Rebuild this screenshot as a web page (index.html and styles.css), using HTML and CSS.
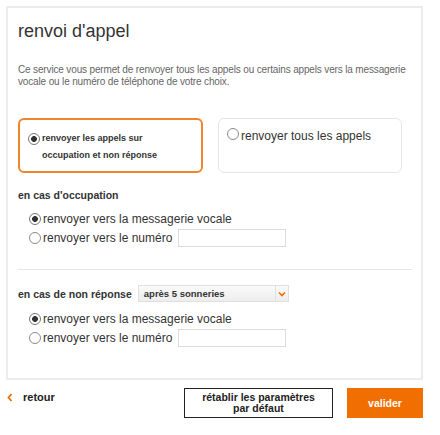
FILE: index.html
```html
<!DOCTYPE html>
<html lang="fr">
<head>
<meta charset="UTF-8">
<meta name="viewport" content="width=device-width, initial-scale=1.0">
<title>renvoi d'appel</title>
<link rel="stylesheet" href="styles.css">
</head>
<body>
  <div class="panel">
    <h1>renvoi d'appel</h1>
    <p class="intro">Ce service vous permet de renvoyer tous les appels ou certains appels vers la messagerie vocale ou le numéro de téléphone de votre choix.</p>

    <div class="choices">
      <label class="choice selected">
        <input type="radio" name="mode" checked>
        <span>renvoyer les appels sur<br>occupation et non réponse</span>
      </label>
      <label class="choice">
        <input type="radio" name="mode">
        <span>renvoyer tous les appels</span>
      </label>
    </div>

    <div class="section">
      <div class="section-title">en cas d'occupation</div>
      <label class="option"><input type="radio" name="busy" checked> renvoyer vers la messagerie vocale</label>
      <label class="option"><input type="radio" name="busy"> renvoyer vers le numéro <input type="text" class="number"></label>
    </div>

    <hr class="sep">

    <div class="section">
      <div class="section-title inline">
        en cas de non réponse
        <div class="select">
          <span>après 5 sonneries</span>
          <span class="arrow">
            <svg width="8" height="6" viewBox="0 0 8 6"><path d="M1 1.5 L4 4.5 L7 1.5" fill="none" stroke="#f16e00" stroke-width="1.6"/></svg>
          </span>
        </div>
      </div>
      <label class="option"><input type="radio" name="noanswer" checked> renvoyer vers la messagerie vocale</label>
      <label class="option"><input type="radio" name="noanswer"> renvoyer vers le numéro <input type="text" class="number"></label>
    </div>
  </div>

  <div class="footer">
    <a class="back" href="#">
      <svg width="6" height="9" viewBox="0 0 6 9"><path d="M4.5 1 L1.5 4.5 L4.5 8" fill="none" stroke="#f16e00" stroke-width="1.8"/></svg>
      retour
    </a>
    <div class="actions">
      <button class="reset">rétablir les paramètres<br>par défaut</button>
      <button class="submit">valider</button>
    </div>
  </div>
</body>
</html>
```

FILE: styles.css
```css
body {
  margin: 0;
  font-family: "Liberation Sans", Arial, Helvetica, sans-serif;
  color: #333;
  background-color: #fff;
}
.panel {
  margin: 6px 0 0 6px;
  width: 394px;
  border: 2px solid #ececec;
  padding: 11px 9px 31px 10px;
}
h1 {
  margin: 0;
  font-size: 18px;
  line-height: 24px;
  font-weight: normal;
  color: #333;
}
.intro {
  margin: 21px 0 0 0;
  font-size: 10px;
  letter-spacing: -0.15px;
  line-height: 12px;
  color: #666;
}
.choices {
  display: flex;
  gap: 15px;
  margin-top: 30px;
}
.choice {
  display: flex;
  align-items: flex-start;
  width: 184px;
  height: 55px;
  box-sizing: border-box;
  border: 1px solid #e6e6e6;
  border-radius: 6px;
  padding: 9px 8px;
  font-size: 12px;
  line-height: 16px;
  color: #333;
}
.choice input {
  margin-top: 4px;
}
.choice.selected {
  width: 185px;
  border: 2px solid #f0852d;
  padding: 10px 8px;
  font-size: 9px;
  font-weight: bold;
  line-height: 17px;
}
.choice.selected input {
  margin-top: 3px;
}
input[type="radio"] {
  appearance: none;
  -webkit-appearance: none;
  width: 12px;
  height: 12px;
  margin: 0 2px 0 0;
  flex-shrink: 0;
  border: 1px solid #8a8a8a;
  border-radius: 50%;
  background: #fff;
  box-sizing: border-box;
}
input[type="radio"]:checked {
  background: radial-gradient(circle, #333 0 2.6px, #fff 3.2px);
  border-color: #777;
}
.section {
  margin-top: 15px;
}
.section-title {
  font-size: 10.5px;
  font-weight: bold;
  line-height: 14px;
  margin-bottom: 7px;
}
.section-title.inline {
  display: flex;
  align-items: center;
  gap: 6px;
  height: 17px;
}
.option {
  display: flex;
  align-items: center;
  height: 19px;
  padding-left: 11px;
  font-size: 12px;
  color: #333;
}
.number {
  width: 108px;
  height: 18px;
  box-sizing: border-box;
  margin-left: 6px;
  border: 1px solid #dcdcdc;
  background: #fff;
}
.sep {
  margin: 22px 0 0 0;
  border: none;
  border-top: 1px solid #e6e6e6;
}
.select {
  display: flex;
  align-items: center;
  justify-content: space-between;
  width: 151px;
  height: 17px;
  box-sizing: border-box;
  border: 1px solid #e0e0e0;
  background: linear-gradient(#fafafa, #ededed);
  font-size: 9.5px;
  font-weight: bold;
  padding-left: 5px;
}
.select .arrow {
  display: flex;
  align-items: center;
  justify-content: center;
  width: 12px;
  height: 100%;
  border-left: 1px solid #e0e0e0;
}
.footer {
  display: flex;
  justify-content: space-between;
  align-items: flex-start;
  width: 417px;
  margin: 8px 0 0 6px;
}
.back {
  display: flex;
  align-items: center;
  gap: 10px;
  margin-top: 3px;
  margin-left: 1px;
  color: #222;
  font-size: 11px;
  font-weight: bold;
  text-decoration: none;
}
.actions {
  display: flex;
  gap: 14px;
}
button {
  height: 30px;
  font-family: inherit;
  font-size: 10.5px;
  font-weight: bold;
  line-height: 11px;
  cursor: pointer;
}
.reset {
  width: 149px;
  background: #fff;
  color: #222;
  border: 1px solid #222;
}
.submit {
  width: 76px;
  background: #f16e00;
  color: #fff;
  border: none;
}
```
